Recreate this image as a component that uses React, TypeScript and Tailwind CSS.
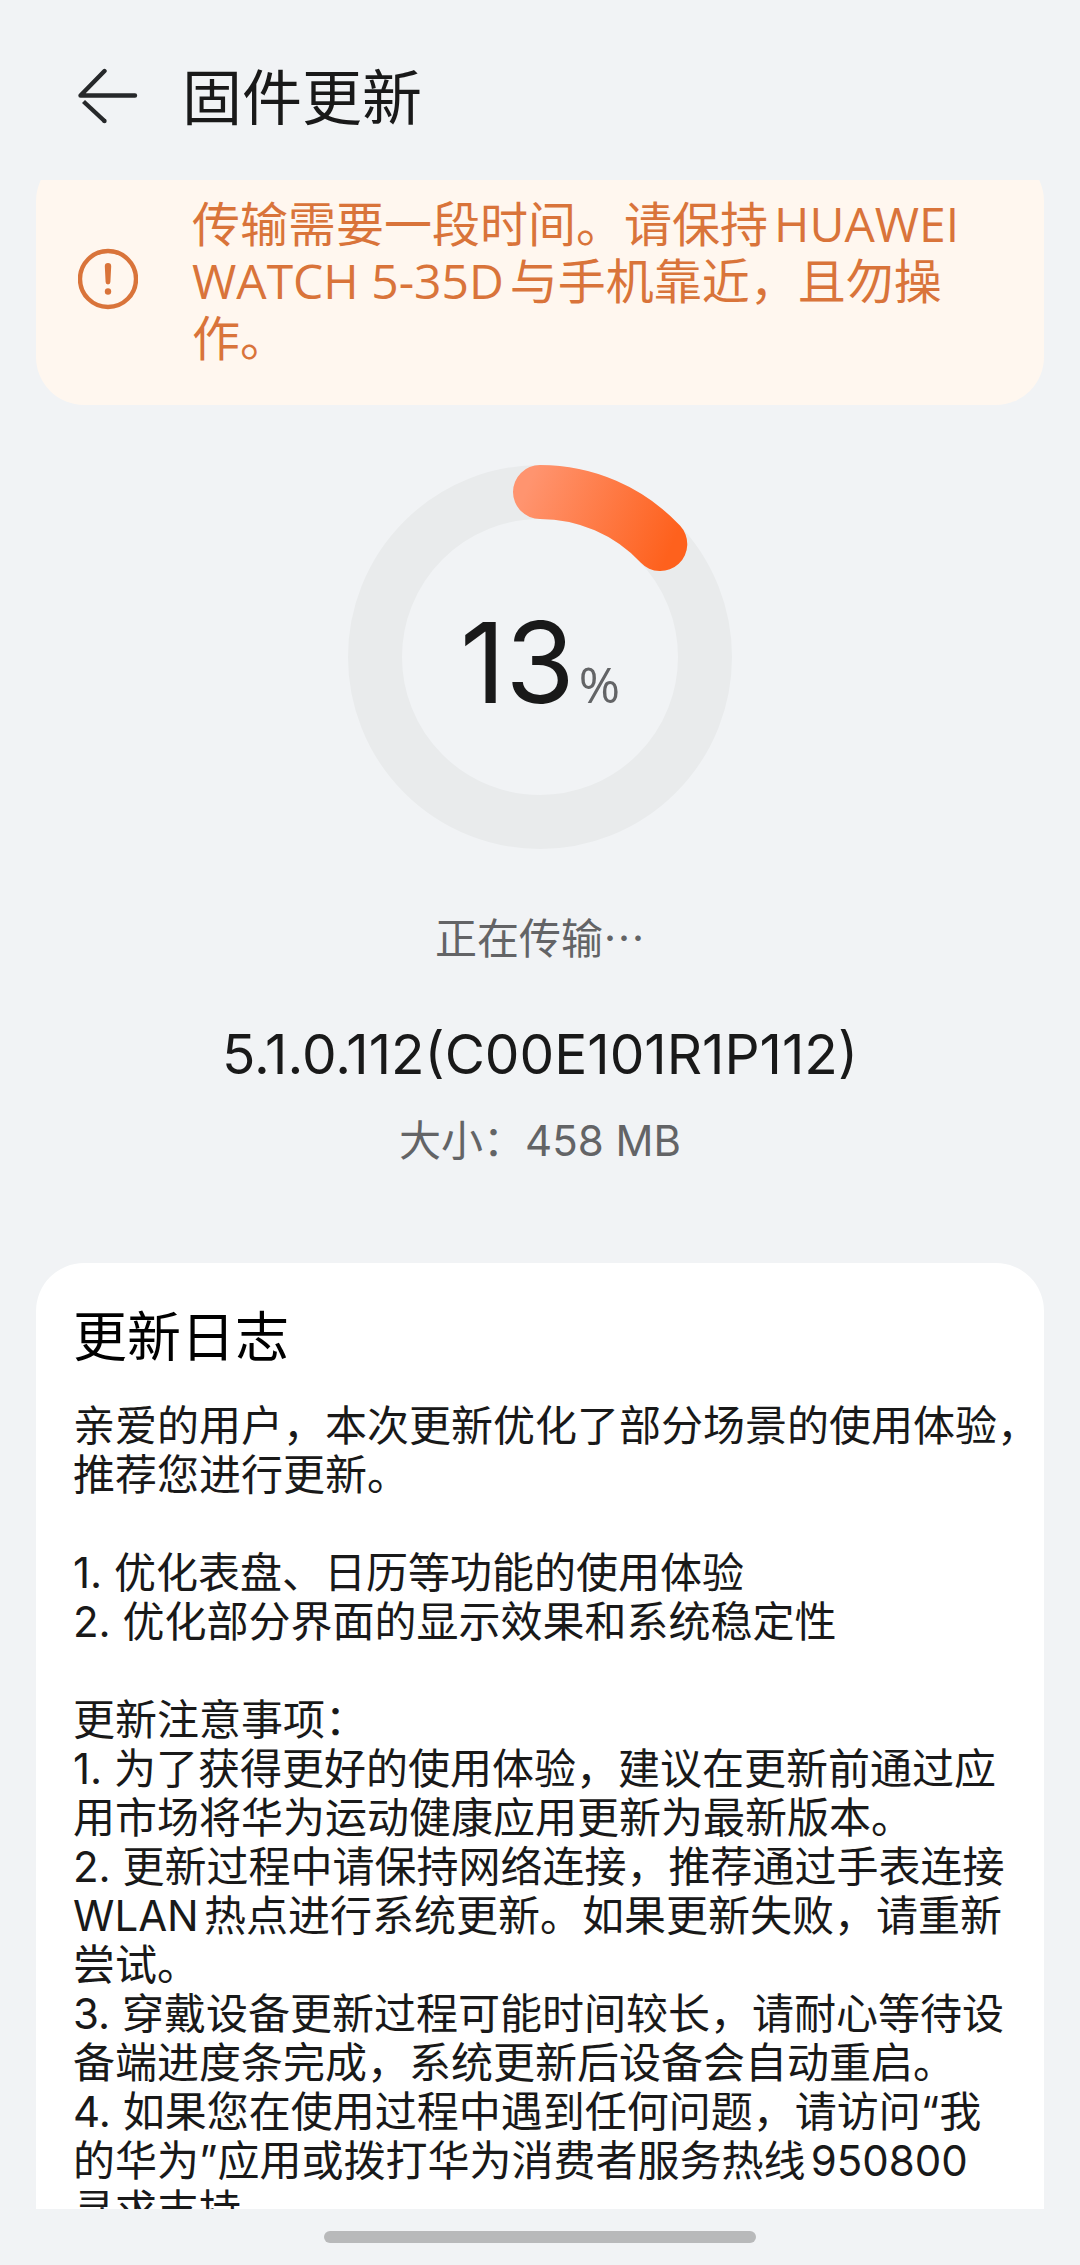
import React from "react";

const PROGRESS = 13;
const RADIUS = 165;

const LOG = `亲爱的用户，本次更新优化了部分场景的使用体验，
推荐您进行更新。

1. 优化表盘、日历等功能的使用体验
2. 优化部分界面的显示效果和系统稳定性

更新注意事项：
1. 为了获得更好的使用体验，建议在更新前通过应
用市场将华为运动健康应用更新为最新版本。
2. 更新过程中请保持网络连接，推荐通过手表连接
WLAN热点进行系统更新。如果更新失败，请重新
尝试。
3. 穿戴设备更新过程可能时间较长，请耐心等待设
备端进度条完成，系统更新后设备会自动重启。
4. 如果您在使用过程中遇到任何问题，请访问“我
的华为”应用或拨打华为消费者服务热线950800
寻求支持。`;

function arcPath(percent: number) {
  const angle = (percent / 100) * 2 * Math.PI;
  const x = 192 + RADIUS * Math.sin(angle);
  const y = 192 - RADIUS * Math.cos(angle);
  return `M192 ${192 - RADIUS}A${RADIUS} ${RADIUS} 0 ${percent > 50 ? 1 : 0} 1 ${x} ${y}`;
}

function Header() {
  return (
    <header className="flex h-[180px] shrink-0 items-center gap-[44px] px-[76px] pt-4">
      <button type="button" aria-label="返回">
        <svg width="62" height="60" viewBox="0 0 62 60" fill="none" stroke="#26282a" strokeWidth="4.4" strokeLinejoin="round">
          <path d="M59 27.5H4.5L28.5 3" strokeLinecap="round" />
          <path d="M7.5 33.5L28.5 53" />
          <circle cx="28.5" cy="53" r="2.2" fill="#26282a" stroke="none" />
        </svg>
      </button>
      <h1 className="text-[60px] leading-[72px] text-[#191919]">固件更新</h1>
    </header>
  );
}

function Notice() {
  return (
    <section className="-mt-[27px] flex h-[252px] items-center gap-[54px] rounded-[48px] bg-[#fff7ef] px-[42px] text-[#d9743a]">
      <svg className="shrink-0" width="60" height="62" viewBox="0 0 60 62" fill="none" stroke="currentColor">
        <circle cx="30" cy="31" r="28" strokeWidth="4.4" />
        <path d="M26.8 18.2A3.2 3.2 0 0 1 33.2 18.2L32.4 34A2.4 2.4 0 0 1 27.6 34Z" fill="currentColor" stroke="none" />
        <circle cx="30" cy="43.5" r="3.2" fill="currentColor" stroke="none" />
      </svg>
      <p className="pt-0.5 font-['Open_Sans','Noto_Sans_CJK_SC',sans-serif] text-[48px] leading-[57px] whitespace-pre-line">
        {"传输需要一段时间。请保持HUAWEI\nWATCH 5-35D与手机靠近，且勿操\n作。"}
      </p>
    </section>
  );
}

function ProgressRing() {
  return (
    <div
      className="mt-[60px] grid size-[384px] place-items-center self-center"
      role="progressbar"
      aria-label="传输进度"
      aria-valuenow={PROGRESS}
      aria-valuemin={0}
      aria-valuemax={100}
    >
      <svg className="col-start-1 row-start-1" width="384" height="384" viewBox="0 0 384 384" fill="none">
        <defs>
          <linearGradient id="arc" gradientUnits="userSpaceOnUse" x1="176" y1="30" x2="320" y2="90">
            <stop offset="0" stopColor="#ff946f" />
            <stop offset="1" stopColor="#fe611d" />
          </linearGradient>
        </defs>
        <circle cx="192" cy="192" r={RADIUS} stroke="#e9ebec" strokeWidth="54" />
        <path d={arcPath(PROGRESS)} stroke="url(#arc)" strokeWidth="54" strokeLinecap="round" />
      </svg>
      <p className="col-start-1 row-start-1 flex items-baseline gap-1 pt-8 leading-[120px]">
        <span className="text-[112px] text-[#191919]">{PROGRESS}</span>
        <span className="font-['Open_Sans',sans-serif] text-[50px] text-[#636466]">%</span>
      </p>
    </div>
  );
}

export default function App() {
  return (
    <div
      lang="zh-CN"
      className="flex h-screen flex-col overflow-hidden bg-[#f1f3f5] font-['Inter','Noto_Sans_CJK_SC',sans-serif] [text-autospace:normal]"
    >
      <Header />
      <main className="flex min-h-0 flex-1 flex-col overflow-hidden px-9">
        <div className="flex shrink-0 flex-col">
          <Notice />
          <ProgressRing />
          <div className="mt-[57px] flex flex-col items-center text-center text-[#636466]">
            <p className="font-['Noto_Sans_CJK_SC',sans-serif] text-[42px] leading-[60px]">正在传输…</p>
            <h2 className="mt-[52px] text-[55px] leading-[72px] text-[#191919]">5.1.0.112(C00E101R1P112)</h2>
            <p className="mt-[21px] text-[42px] leading-[60px]">大小：458 MB</p>
          </div>
          <section className="mt-[92px] rounded-[48px] bg-white py-[39px] pl-[37px]">
            <h2 className="text-[54px] leading-[72px] text-black">更新日志</h2>
            <p className="mt-[27px] text-[42px] leading-[49px] whitespace-pre-line text-[#191919]">{LOG}</p>
          </section>
        </div>
      </main>
      <footer className="flex h-14 shrink-0 items-center justify-center">
        <div className="h-3 w-2/5 rounded-full bg-[#b8b9ba]" />
      </footer>
    </div>
  );
}
